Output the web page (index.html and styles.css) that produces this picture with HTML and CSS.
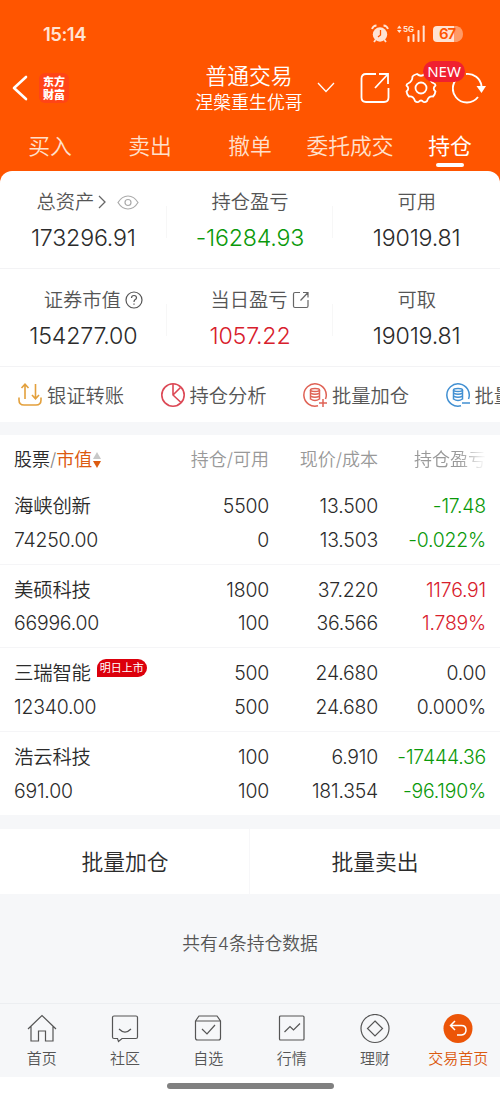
FILE: index.html
```html
<!DOCTYPE html>
<html lang="zh-CN">
<head>
    <meta charset="UTF-8">
    <meta name="viewport" content="width=device-width, initial-scale=1.0">
    <title>普通交易 - 持仓</title>
    <link rel="stylesheet" href="styles.css">
</head>
<body>
    <header class="header">
        <div class="status-bar">
            <span class="time">15:14</span>
            <svg class="status-icons" width="94" height="20" viewBox="0 0 94 20">
                <g fill="#ffe3d3">
                    <circle cx="10" cy="10.500" r="7.200"/>
                    <path d="M2 5 A5 5 0 0 1 6.500 1.500 M13.500 1.500 A5 5 0 0 1 18 5 M5.500 16 L4 18 M14.500 16 L16 18" fill="none" stroke="#ffe3d3" stroke-width="1.800"/>
                    <path d="M27 4.500 l2.300 -3 l2.300 3z M27 6 l2.300 3 l2.300 -3z"/>
                    <rect x="37.500" y="12" width="2" height="6" rx=".8"/>
                    <rect x="42.500" y="10" width="2" height="8" rx=".8"/>
                    <rect x="47.500" y="6" width="2" height="12" rx=".8"/>
                    <rect x="52.700" y="1.500" width="2" height="16.500" rx=".8"/>
                    <text x="33" y="7.800" class="net-text">5G</text>
                    <path d="M67 2 H84 V18 H67 Q63 18 63 14 V6 Q63 2 67 2z"/>
                </g>
                <path d="M84 2 H87 Q93 4 93 10 Q93 16 87 18 H84z" fill="#ff9a66"/>
                <path d="M10.500 6 V11 L8 13" fill="none" stroke="#ff5500" stroke-width="1.300"/>
                <text x="69" y="15.300" class="battery-text">67</text>
            </svg>
        </div>

        <div class="title-bar">
            <svg class="back" width="16" height="26" viewBox="0 0 16 26" fill="none" stroke="#fff" stroke-width="2.600" stroke-linecap="round" stroke-linejoin="round"><path d="M14 2 L2 13 L14 24"/></svg>
            <div class="logo">东方<br>财富</div>
            <div class="account">
                <div class="account-type">普通交易</div>
                <div class="account-name">涅槃重生优哥</div>
            </div>
            <svg class="arrow-down" width="18" height="11" viewBox="0 0 18 11" fill="none" stroke="#fff" stroke-width="1.300"><path d="M1 1 L9 9.500 L17 1"/></svg>
            <svg class="share" width="30" height="32" viewBox="0 0 30 32" fill="none" stroke="#fff" stroke-width="1.800"><path d="M16 2 H6 Q1.500 2 1.500 6.500 V25.500 Q1.500 30 6 30 H24 Q28.500 30 28.500 25.500 V16 M19 2 H28 V12 M28 2 L15 16"/></svg>
            <div class="settings">
                <svg width="32" height="32" viewBox="0 0 32 32" fill="none" stroke="#fff" stroke-width="1.800" stroke-linejoin="round"><path d="M12 2 Q16 5.500 20 2 L24.500 4.500 Q24.500 9.500 29 11.500 Q30.500 12 30.500 13.500 Q27 16.500 30.500 19.500 Q30 22.500 28 24.500 Q23.500 24 22 29 Q20.500 30.500 18.500 30 Q16 27 13.500 30 Q11.500 30.500 10 29 Q8.500 24 4 24.500 Q2 22.500 1.500 19.500 Q5 16.500 1.500 13.500 Q1.500 12 3 11.500 Q7.500 9.500 7.500 4.500 Q8.500 3 12 2z"/><circle cx="16" cy="16" r="5.500"/></svg>
                <span class="new-badge">NEW</span>
            </div>
            <svg class="refresh" width="34" height="32" viewBox="0 0 34 32"><path d="M14 2 A14 14 0 0 1 29.500 14 M26 25 A14 14 0 1 1 9 3.800" fill="none" stroke="#fff" stroke-width="1.900"/><path d="M24.500 14 H34 L29.500 21z" fill="#fff"/></svg>
        </div>

        <nav class="tabs">
            <span>买入</span>
            <span>卖出</span>
            <span>撤单</span>
            <span>委托成交</span>
            <span class="active">持仓</span>
        </nav>
    </header>

    <div class="sheet">
        <section class="summary">
            <div class="cell">
                <div class="label label-total">总资产<svg width="8" height="14" viewBox="0 0 8 14" fill="none" stroke="#666" stroke-width="1.300"><path d="M1 1 L7 7 L1 13"/></svg><svg class="eye" width="22" height="15" viewBox="0 0 22 15" fill="none" stroke="#aaa" stroke-width="1.200"><path d="M1 7.500 Q5 1 11 1 T21 7.500 Q17 14 11 14 T1 7.500z"/><circle cx="11" cy="7.500" r="3"/></svg></div>
                <div class="value">173296.91</div>
            </div>
            <div class="cell">
                <div class="label">持仓盈亏</div>
                <div class="value down">-16284.93</div>
            </div>
            <div class="cell">
                <div class="label">可用</div>
                <div class="value">19019.81</div>
            </div>
            <div class="cell">
                <div class="label label-icon">证券市值<svg width="18" height="18" viewBox="0 0 18 18" fill="none" stroke="#555" stroke-width="1.200"><circle cx="9" cy="9" r="8"/><path d="M6.500 7 Q6.500 4.500 9 4.500 T11.500 6.800 Q11.500 8 10 8.800 Q9 9.400 9 11 M9 12.400 V13.800"/></svg></div>
                <div class="value">154277.00</div>
            </div>
            <div class="cell">
                <div class="label label-icon">当日盈亏<svg width="18" height="18" viewBox="0 0 18 18" fill="none" stroke="#666" stroke-width="1.200"><path d="M8 1.500 H3 Q1.500 1.500 1.500 3 V15 Q1.500 16.500 3 16.500 H14.500 Q16 16.500 16 15 V9 M11 1.500 H16 V6.500 M16 1.500 L8.500 9.500"/></svg></div>
                <div class="value up">1057.22</div>
            </div>
            <div class="cell">
                <div class="label">可取</div>
                <div class="value">19019.81</div>
            </div>
        </section>

        <section class="actions">
            <div class="action">
                <svg width="26" height="26" viewBox="0 0 26 26" fill="none" stroke="#e3a03c" stroke-width="1.600"><path d="M2 15.500 V18 Q2 23 7 23 H19 Q24 23 24 18 V15.500 M8 17 V2.500 M4.500 6 L8 2.200 L11.500 6 M18.500 2 V16.500 M15 13 L18.500 16.800 L22 13"/></svg>
                <span>银证转账</span>
            </div>
            <div class="action">
                <svg width="26" height="26" viewBox="0 0 26 26" fill="none" stroke="#dc4855" stroke-width="1.600"><circle cx="13" cy="13" r="11.200"/><path d="M13 2 V13 L21 20.500 M13 13 L20.500 5.500"/></svg>
                <span>持仓分析</span>
            </div>
            <div class="action">
                <svg width="26" height="26" viewBox="0 0 26 26" fill="none" stroke="#df6255" stroke-width="1.500"><path d="M16 23.800 A11.200 11.200 0 1 1 23.500 17 M17 21 H25 M21 17 V25"/><ellipse cx="13" cy="8" rx="4.500" ry="1.500"/><path d="M8.500 8 V17 Q13 20 17.500 17 V8 M8.500 11.200 Q13 13.500 17.500 11.200 M8.500 14.200 Q13 16.500 17.500 14.200"/></svg>
                <span>批量加仓</span>
            </div>
            <div class="action">
                <svg width="26" height="26" viewBox="0 0 26 26" fill="none" stroke="#4290d2" stroke-width="1.500"><path d="M16 23.800 A11.200 11.200 0 1 1 23.500 17 M17 21 H25"/><ellipse cx="13" cy="8" rx="4.500" ry="1.500"/><path d="M8.500 8 V17 Q13 20 17.500 17 V8 M8.500 11.200 Q13 13.500 17.500 11.200 M8.500 14.200 Q13 16.500 17.500 14.200"/></svg>
                <span>批量卖出</span>
            </div>
        </section>
    </div>

    <section class="holdings">
        <div class="row table-head">
            <div class="sort">股票<i>/</i><b>市值</b><svg width="8" height="16" viewBox="0 0 8 16"><path d="M0 7 L4 0 L8 7z" fill="#c8c8c8"/><path d="M0 9 L4 16 L8 9z" fill="#dc5a10"/></svg></div>
            <div>持仓/可用</div>
            <div>现价/成本</div>
            <div class="fade">持仓盈亏</div>
        </div>
        <div class="row">
            <div>海峡创新</div><div>5500</div><div>13.500</div><div class="down">-17.48</div>
            <div>74250.00</div><div>0</div><div>13.503</div><div class="down">-0.022%</div>
        </div>
        <div class="row">
            <div>美硕科技</div><div>1800</div><div>37.220</div><div class="up">1176.91</div>
            <div>66996.00</div><div>100</div><div>36.566</div><div class="up">1.789%</div>
        </div>
        <div class="row">
            <div class="name">三瑞智能<span class="tag">明日上市</span></div><div>500</div><div>24.680</div><div>0.00</div>
            <div>12340.00</div><div>500</div><div>24.680</div><div>0.000%</div>
        </div>
        <div class="row">
            <div>浩云科技</div><div>100</div><div>6.910</div><div class="down">-17444.36</div>
            <div>691.00</div><div>100</div><div>181.354</div><div class="down">-96.190%</div>
        </div>
    </section>

    <div class="batch">
        <div>批量加仓</div>
        <div>批量卖出</div>
    </div>

    <p class="count">共有4条持仓数据</p>

    <footer class="bottom-nav">
        <div class="nav-item">
            <svg width="30" height="30" viewBox="0 0 30 30"><path d="M1 15 L15 1.500 L29 15 M4 12.500 V27 H11.500 V17 H18.500 V27 H26 V12.500"/></svg>
            <span>首页</span>
        </div>
        <div class="nav-item">
            <svg width="30" height="30" viewBox="0 0 30 30"><path d="M4 2 H26 Q27.500 2 27.500 3.500 V23 Q27.500 24.500 26 24.500 H12 L8.500 27.500 L7.500 24.500 H4 Q2.500 24.500 2.500 23 V3.500 Q2.500 2 4 2z M9 15 Q15 21 21 15"/></svg>
            <span>社区</span>
        </div>
        <div class="nav-item">
            <svg width="30" height="30" viewBox="0 0 30 30"><path d="M2.500 7 L6 2 H24 L27.500 7 V24 Q27.500 26 25.500 26 H4.500 Q2.500 26 2.500 24z H27.500 M9 15 L14 20 L22 11"/></svg>
            <span>自选</span>
        </div>
        <div class="nav-item">
            <svg width="30" height="30" viewBox="0 0 30 30"><rect x="2.500" y="2" width="24.500" height="24" rx="1"/><path d="M7.500 18 L13 12.500 L16.500 16 L23 9.500"/></svg>
            <span>行情</span>
        </div>
        <div class="nav-item">
            <svg width="30" height="30" viewBox="0 0 30 30"><circle cx="15" cy="14.500" r="14"/><path d="M15 7 L22.500 14.500 L15 22 L7.500 14.500z"/></svg>
            <span>理财</span>
        </div>
        <div class="nav-item current">
            <svg width="30" height="30" viewBox="0 0 30 30"><circle cx="15" cy="14.500" r="14.500"/><path d="M12 7 L7.500 11.500 L12 16 M7.500 11.500 H18.500 Q23 11.500 23 16 T18.500 21 H14"/></svg>
            <span>交易首页</span>
        </div>
    </footer>
    <div class="home-bar"><span></span></div>
</body>
</html>
```
FILE: styles.css
```css
* {
    box-sizing: border-box;
}
body {
    margin: 0;
    width: 500px;
    height: 1099px;
    overflow: hidden;
    display: flex;
    flex-direction: column;
    background: #f6f7f9;
    color: #2b2b2b;
    font-family: Inter, "Noto Sans CJK SC", sans-serif;
    font-weight: 350;
}
svg {
    display: block;
    flex: none;
}
.up {
    color: #d8202c;
}
.down {
    color: #0a990a;
}

/* header */
.header {
    height: 191px;
    flex: none;
    background: #ff5500;
    color: #fff;
}
.status-bar {
    display: flex;
    justify-content: space-between;
    align-items: center;
    height: 67px;
    padding: 0 36px 0 43px;
}
.time {
    font-size: 18.5px;
    font-weight: 600;
    letter-spacing: -0.5px;
    color: #ffe3d3;
}
.net-text {
    font-size: 8px;
    font-weight: 700;
}
.battery-text {
    font-size: 15px;
    font-weight: 600;
    letter-spacing: -1px;
    fill: #ff5500;
}
.title-bar {
    display: flex;
    align-items: center;
    height: 41px;
    padding-left: 12px;
}
.logo {
    width: 30px;
    height: 30px;
    margin-left: 11px;
    padding-top: 2px;
    border-radius: 6px;
    background: #ff4416;
    font: 900 11px/13px "Noto Sans CJK SC", sans-serif;
    text-align: center;
}
.account {
    width: 110px;
    margin-left: 125px;
    padding-top: 2px;
    text-align: center;
    white-space: nowrap;
}
.account-type {
    font-size: 21.8px;
    line-height: 28px;
}
.account-name {
    font-size: 17.9px;
    line-height: 26px;
}
.arrow-down {
    margin-left: 13px;
}
.share {
    margin-left: 25px;
}
.settings {
    position: relative;
    margin-left: 15px;
}
.new-badge {
    position: absolute;
    left: 18px;
    top: -11px;
    width: 42px;
    height: 21px;
    border-radius: 11px;
    background: #f02030;
    font: 400 15px/21px "Noto Sans", sans-serif;
    text-align: center;
}
.refresh {
    margin-left: 15px;
}
.tabs {
    display: grid;
    grid-template-columns: repeat(5, 1fr);
    height: 62px;
    padding-top: 18px;
    font-size: 21.8px;
    line-height: 40px;
    text-align: center;
    color: #ffe0cc;
}
.tabs .active {
    color: #fff;
    font-weight: 400;
}
.tabs .active::after {
    content: "";
    display: block;
    width: 28px;
    height: 4px;
    margin: -3px auto 0;
    border-radius: 2px;
    background: #fff;
}

/* assets */
.sheet {
    flex: none;
    height: 251px;
    margin-top: -20px;
    border-radius: 12px 12px 0 0;
    background: #fff;
    overflow: hidden;
}
.summary {
    display: grid;
    grid-template-columns: repeat(3, 1fr);
    grid-auto-rows: 97.75px;
}
.cell {
    padding-top: 15px;
    border-bottom: 1px solid #f3f3f5;
    background: linear-gradient(#f7f7f7, #f7f7f7) right 35px / 1px 32px no-repeat;
}
.cell:nth-child(3n) {
    background: none;
}
.label {
    display: flex;
    align-items: center;
    justify-content: center;
    gap: 4px;
    font-size: 19.3px;
    line-height: 32px;
    color: #555;
}
.label-icon {
    margin-right: -20px;
}
.label-total {
    margin-right: -9px;
}
.eye {
    margin-left: 7px;
}
.value {
    font-size: 23.2px;
    line-height: 41px;
    letter-spacing: -0.2px;
    text-align: center;
}
.actions {
    display: flex;
    height: 56px;
    padding-left: 17px;
    align-items: center;
}
.action {
    display: flex;
    flex: none;
    align-items: center;
    gap: 4px;
    width: 142.5px;
    font-size: 19.3px;
    white-space: nowrap;
    color: #555;
}

/* holdings */
.holdings {
    flex: none;
    height: 380px;
    margin-top: 13px;
    background: #fff;
}
.row {
    display: grid;
    grid-template-columns: 145px 110px 109px 108px;
    grid-auto-rows: 33.5px;
    height: 83.7px;
    padding: 9px 14px 0;
    border-bottom: 1px solid #f5f5f7;
    font-size: 19.4px;
    line-height: 33.5px;
    letter-spacing: -0.2px;
    text-align: right;
}
.row:last-child {
    border-bottom: none;
}
.row > div:nth-child(4n+1) {
    text-align: left;
}
.table-head {
    height: 46px;
    padding-top: 8px;
    border: none;
    font-size: 18px;
    letter-spacing: 0;
    color: #999;
}
.sort {
    display: flex;
    align-items: center;
    color: #2b2b2b;
}
.sort i {
    font-style: normal;
    color: #888;
}
.sort b {
    font-weight: 400;
    color: #dc5a10;
}
.sort svg {
    margin-left: 1px;
}
.fade {
    -webkit-mask-image: linear-gradient(to right, #000 75%, transparent);
    mask-image: linear-gradient(to right, #000 75%, transparent);
}
.name {
    display: flex;
}
.tag {
    width: 50px;
    height: 18px;
    margin: 2px 0 0 6px;
    border-radius: 9px 9px 9px 0;
    background: #dc000c;
    color: #fff;
    font-size: 11px;
    font-weight: 400;
    line-height: 18px;
    letter-spacing: 0;
    text-align: center;
}

.batch {
    display: grid;
    grid-template-columns: 1fr 1fr;
    flex: none;
    height: 65px;
    margin-top: 14px;
    background: #fff;
    font-size: 21.8px;
    line-height: 67px;
    text-align: center;
}
.batch div + div {
    margin-left: -1px;
    border-left: 1px solid #f7f7f9;
}
.count {
    margin: 0;
    padding-top: 35px;
    font-size: 17.8px;
    line-height: 30px;
    text-align: center;
    color: #555;
}

/* bottom navigation */
.bottom-nav {
    display: grid;
    grid-template-columns: repeat(6, 1fr);
    height: 74px;
    margin-top: auto;
    padding-top: 10px;
    border-top: 1px solid #eceef1;
}
.nav-item {
    display: flex;
    flex-direction: column;
    align-items: center;
    font-size: 15px;
    line-height: 29px;
    white-space: nowrap;
    color: #555;
}
.nav-item svg {
    fill: none;
    stroke: #555;
    stroke-width: 1.2;
}
.current {
    color: #dc5a10;
}
.nav-item.current circle {
    fill: #ec5508;
    stroke: none;
}
.nav-item.current path {
    stroke: #fff;
    stroke-width: 1.5;
}
.home-bar {
    flex: none;
    height: 22px;
    padding-top: 6px;
    background: #fff;
}
.home-bar span {
    display: block;
    width: 167px;
    height: 6px;
    margin: 0 auto;
    border-radius: 3px;
    background: #808080;
}
```
